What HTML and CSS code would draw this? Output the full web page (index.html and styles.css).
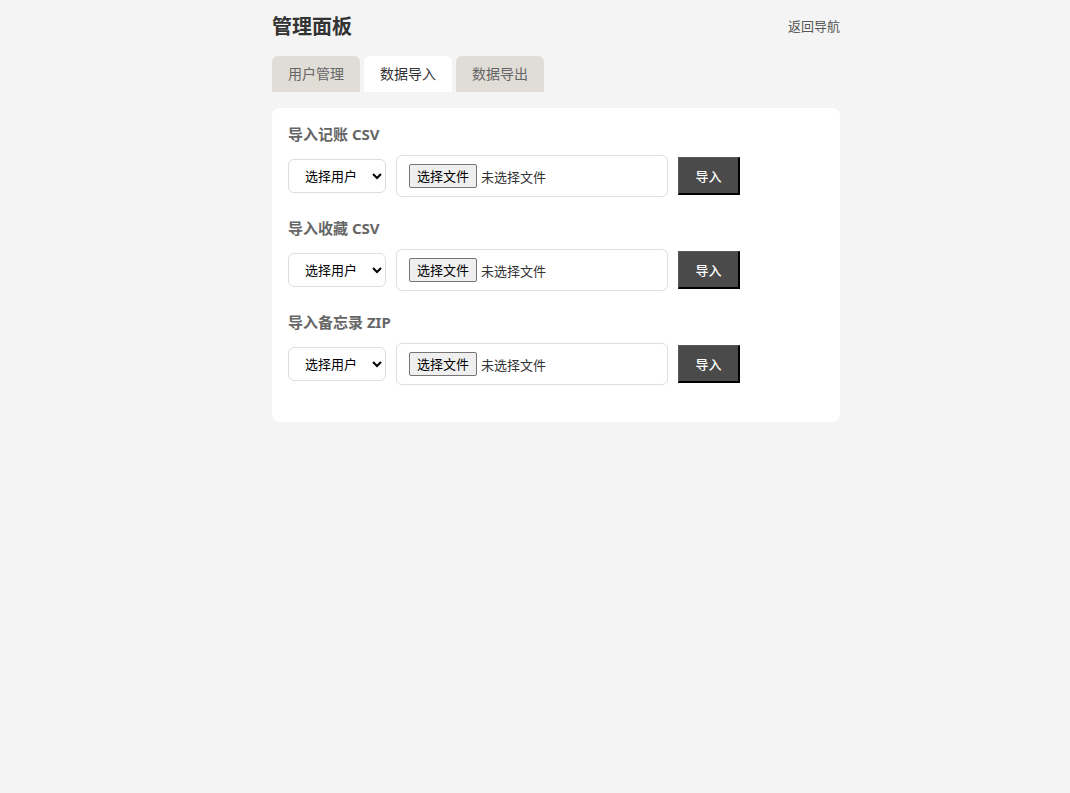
FILE: index.html
```html
<!DOCTYPE html>
<html lang="zh-CN">
<head>
<meta charset="utf-8">
<title>管理面板</title>
<link rel="stylesheet" href="styles.css">
</head>
<body>
<div class="page">
  <header class="header">
    <h1 class="title">管理面板</h1>
    <a class="back" href="#">返回导航</a>
  </header>
  <nav class="tabs">
    <button class="tab">用户管理</button>
    <button class="tab active">数据导入</button>
    <button class="tab">数据导出</button>
  </nav>
  <main class="card">
    <section class="section">
      <h2 class="label">导入记账 CSV</h2>
      <div class="row">
        <select class="user-select"><option>选择用户</option></select>
        <label class="file"><input class="file-input" type="file"><span class="file-btn">选择文件</span><span class="file-name">未选择文件</span></label>
        <button class="btn">导入</button>
      </div>
    </section>
    <section class="section">
      <h2 class="label">导入收藏 CSV</h2>
      <div class="row">
        <select class="user-select"><option>选择用户</option></select>
        <label class="file"><input class="file-input" type="file"><span class="file-btn">选择文件</span><span class="file-name">未选择文件</span></label>
        <button class="btn">导入</button>
      </div>
    </section>
    <section class="section">
      <h2 class="label">导入备忘录 ZIP</h2>
      <div class="row">
        <select class="user-select"><option>选择用户</option></select>
        <label class="file"><input class="file-input" type="file"><span class="file-btn">选择文件</span><span class="file-name">未选择文件</span></label>
        <button class="btn">导入</button>
      </div>
    </section>
  </main>
</div>
</body>
</html>
```

FILE: styles.css
```css
html, body {
  margin: 0;
  padding: 0;
  background: #f4f4f4;
}
body {
  font-family: "Noto Sans", "Noto Sans CJK SC", sans-serif;
  color: #333;
  padding-left: 42px;
}
.page {
  width: 568px;
  margin: 0 auto;
  padding-top: 12px;
}
.header {
  display: flex;
  justify-content: space-between;
  align-items: center;
  height: 30px;
  margin-bottom: 14px;
}
.title {
  margin: 0;
  font-size: 20px;
  font-weight: 700;
  line-height: 30px;
  color: #333;
}
.back {
  font-size: 13px;
  color: #555;
  text-decoration: none;
  padding-bottom: 3px;
}
.tabs {
  display: flex;
  gap: 4px;
  margin-bottom: 16px;
}
.tab {
  width: 88px;
  height: 36px;
  padding: 0;
  border: none;
  border-radius: 6px 6px 0 0;
  background: #e0dcd6;
  color: #666;
  font-family: inherit;
  font-size: 14px;
  line-height: 20px;
}
.tab.active {
  background: #fff;
  color: #333;
}
.card {
  display: block;
  background: #fff;
  border-radius: 8px;
  padding: 16px;
}
.section {
  margin-bottom: 21px;
}
.label {
  margin: 0 0 11px;
  font-size: 15px;
  font-weight: 700;
  line-height: 20px;
  color: #666;
}
.row {
  display: flex;
  align-items: center;
  gap: 10px;
}
.user-select {
  box-sizing: border-box;
  width: 98px;
  height: 34px;
  padding: 0 8px 0 12px;
  border: 1px solid #ddd;
  border-radius: 6px;
  background: #fff;
  font-family: inherit;
  font-size: 13px;
  color: #000;
}
.file {
  box-sizing: border-box;
  display: flex;
  align-items: center;
  gap: 4px;
  width: 272px;
  height: 42px;
  padding: 0 12px;
  border: 1px solid #ddd;
  border-radius: 6px;
  font-size: 13px;
  color: #333;
}
.file-input {
  display: none;
}
.file-btn {
  box-sizing: border-box;
  height: 24px;
  line-height: 22px;
  padding: 0 7px;
  background: #efefef;
  border: 1px solid #767676;
  border-radius: 2px;
  color: #000;
}
.file-name {
  color: #333;
}
.btn {
  box-sizing: border-box;
  height: 38px;
  width: 62px;
  padding: 0;
  background: #4a4a4a;
  color: #fff;
  font-family: inherit;
  font-size: 13px;
  font-weight: 500;
  border-style: solid;
  border-width: 1px 2px 2px 1px;
  border-color: #5a5a5a #000 #000 #5a5a5a;
}
```
